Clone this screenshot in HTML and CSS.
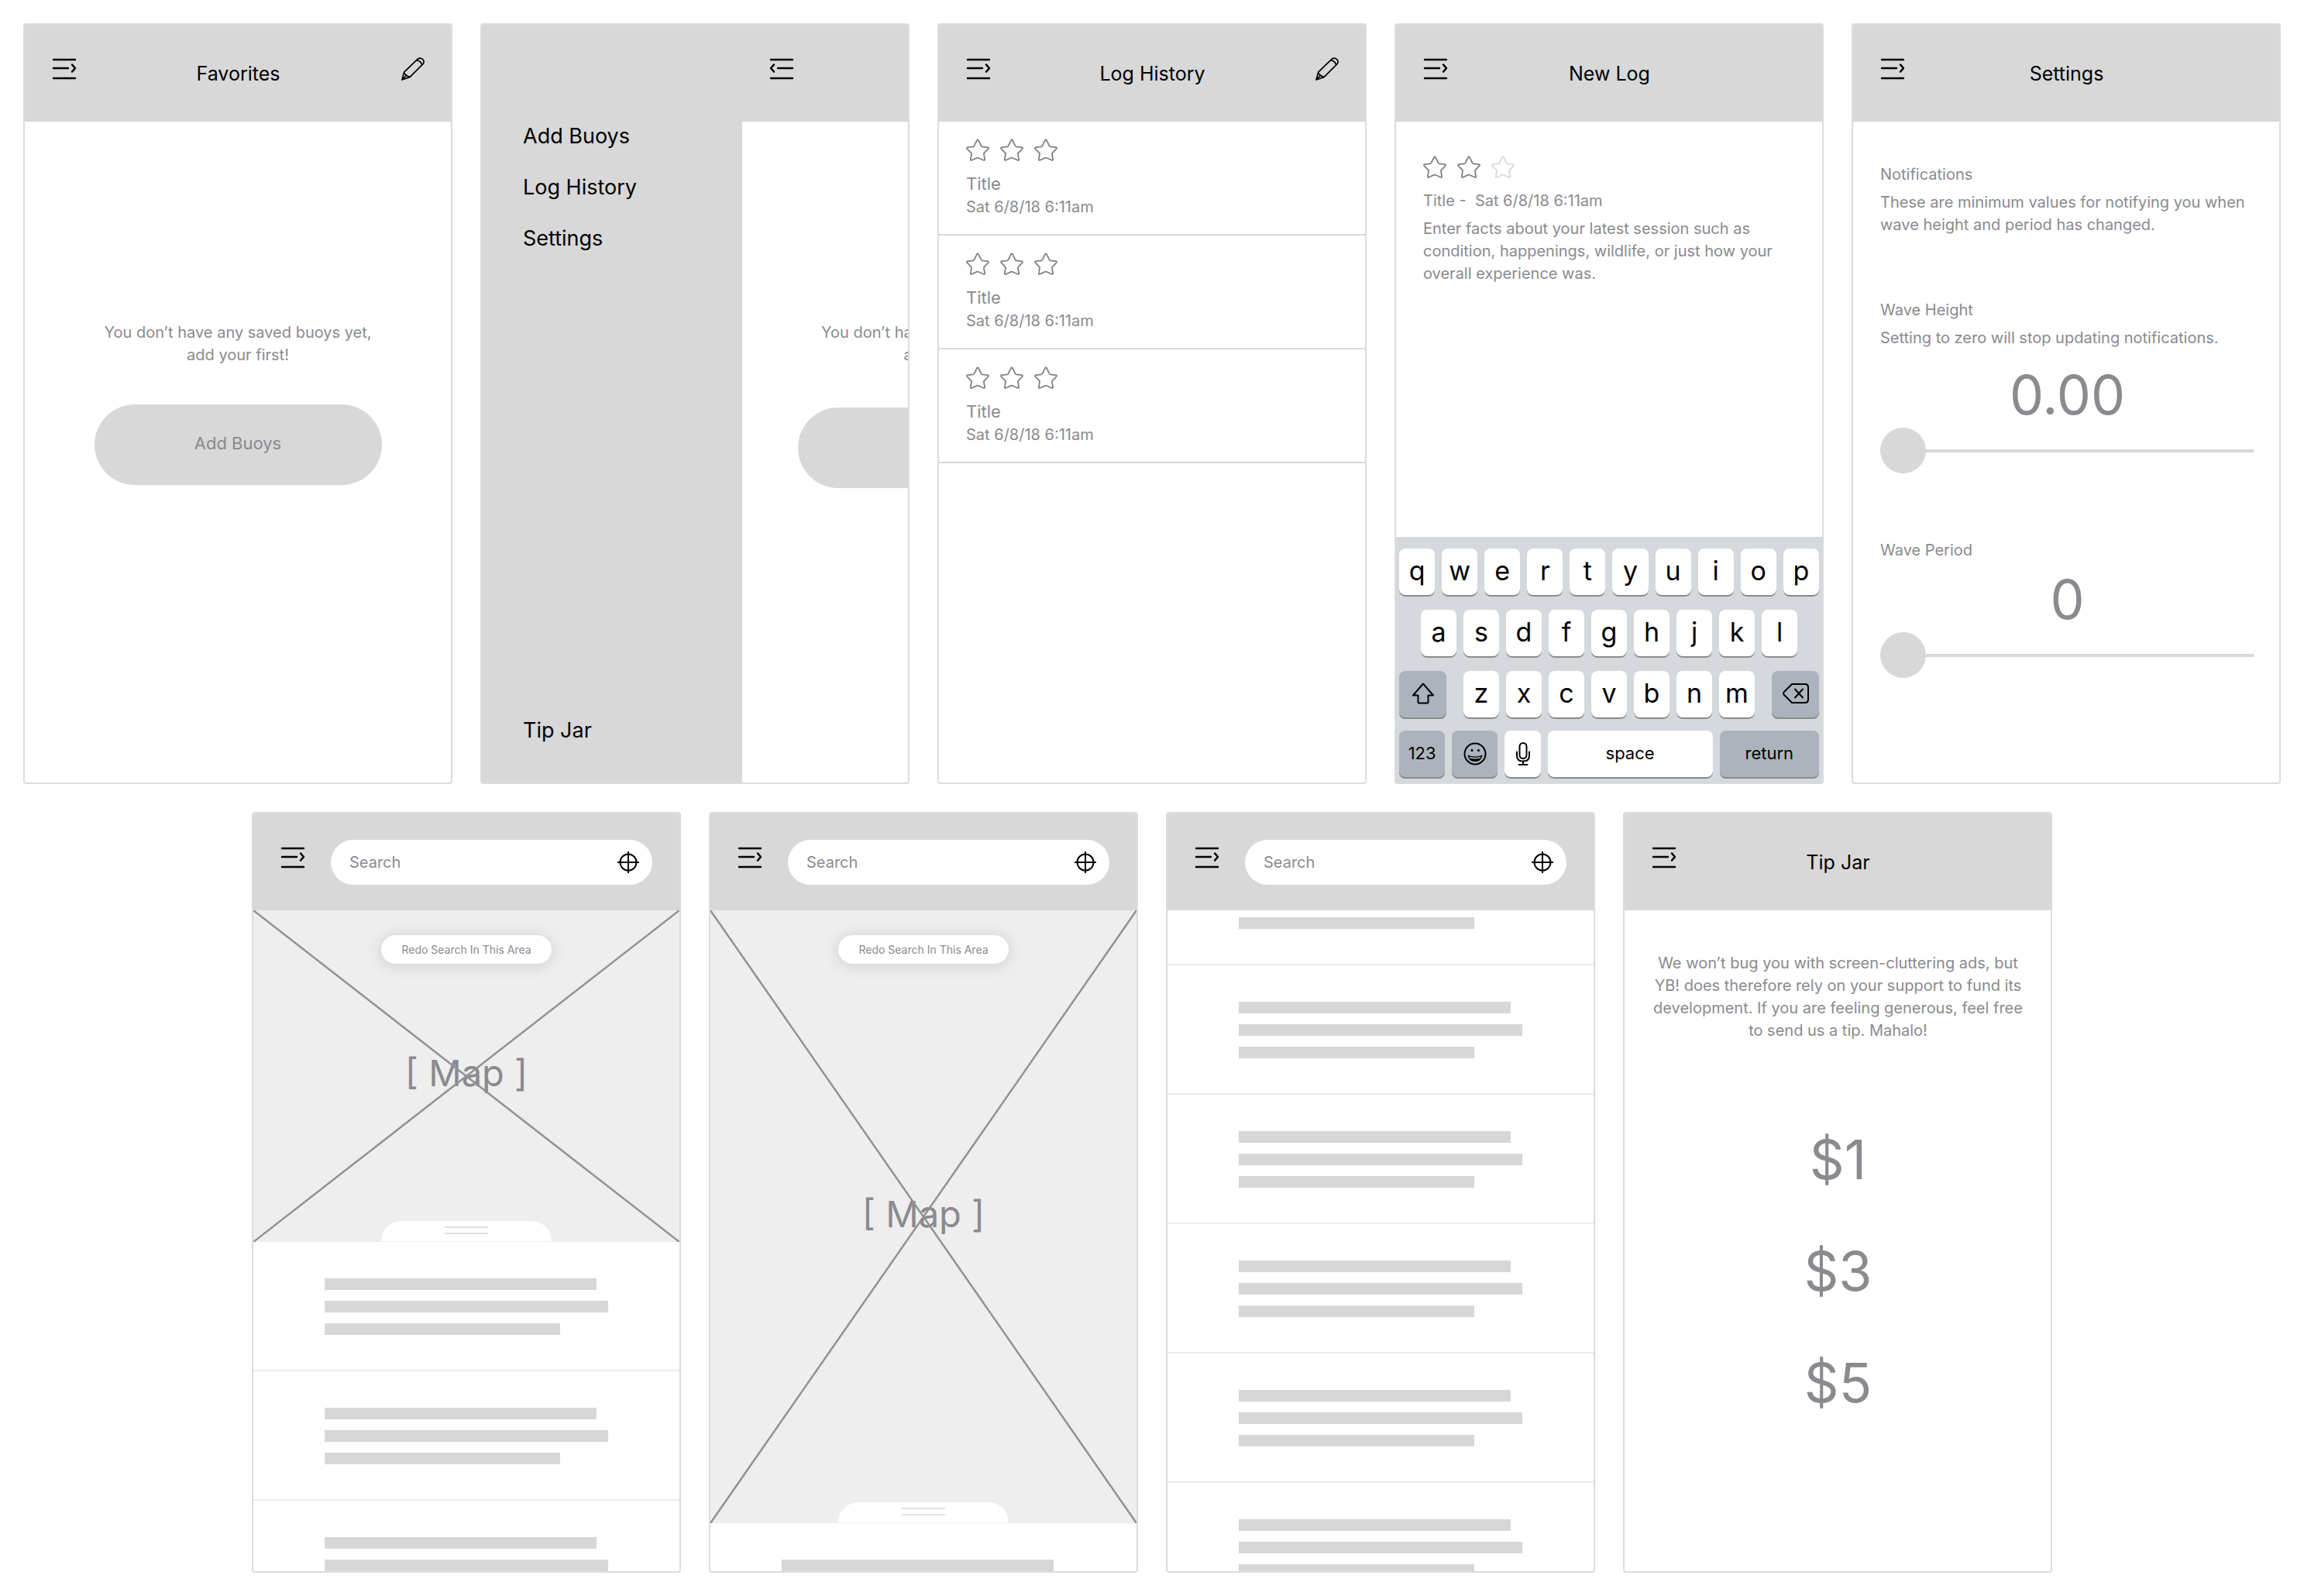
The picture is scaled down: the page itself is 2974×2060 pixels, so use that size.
FILE: index.html
```html
<!DOCTYPE html>
<html lang="en">
<head>
<meta charset="utf-8">
<title>Buoy app wireframes</title>
<link rel="stylesheet" href="styles.css">
</head>
<body>
<svg class="sprite" aria-hidden="true">
  <symbol id="menu" viewBox="0 0 32 28"><path d="M2 2h28M2 13h19M2 26h28M26 8.4l4 4.6-4 4.6"/></symbol>
  <symbol id="menu-back" viewBox="0 0 32 28"><path d="M2 2h28M11 13h19M2 26h28M6 8.4L2 13l4 4.600"/></symbol>
  <symbol id="pencil" viewBox="0 0 30 30"><path d="M1 29l2.600-9.800L21.200 2.200c4.400-3.200 9.800 1.800 7 6.200L11.200 25.400zM3.600 19.200c1.200 3.400 3.800 5.400 7.600 6.200M1 29l5.800-6M19.600 3.800c4 .4 6.600 3 7 6.400"/></symbol>
  <symbol id="star" viewBox="0 0 30 29"><path d="M14 2.200q1-2 2 0l3.700 7.400q.4.7 1.200.8l7 .8q2 .4.600 2l-5 5.200q-.6.600-.5 1.400l1.100 6.800q.2 1.800-1.500 1.200l-6.900-3.100q-.7-.3-1.400 0l-6.900 3.100q-1.700.6-1.500-1.200l1.100-6.800q.1-.8-.5-1.400l-5-5.200q-1.400-1.600.6-2l7-.8q.8-.1 1.200-.8z"/></symbol>
  <symbol id="target" viewBox="0 0 30 30"><circle cx="15" cy="15" r="10.500"/><path d="M15 1v28M1 15h28"/></symbol>
</svg>

<main class="boards">

  <section class="board">
    <header class="bar">
      <button class="icon-btn" aria-label="Open menu"><svg class="icon-menu"><use href="#menu"/></svg></button>
      <h1 class="bar-title">Favorites</h1>
      <button class="icon-btn icon-btn-end" aria-label="Edit"><svg class="icon-pencil"><use href="#pencil"/></svg></button>
    </header>
    <div class="empty">
      <p class="empty-text">You don’t have any saved buoys yet, add your first!</p>
      <button class="pill">Add Buoys</button>
    </div>
  </section>

  <section class="board board-split">
    <nav class="drawer">
      <a href="#">Add Buoys</a>
      <a href="#">Log History</a>
      <a href="#">Settings</a>
      <a class="drawer-last" href="#">Tip Jar</a>
    </nav>
    <div class="pushed">
      <header class="bar">
        <button class="icon-btn" aria-label="Close menu"><svg class="icon-menu"><use href="#menu-back"/></svg></button>
      </header>
      <div class="empty empty-pushed">
        <p class="empty-text">You don’t have any saved buoys yet, add your first!</p>
        <button class="pill" aria-label="Add Buoys"></button>
      </div>
    </div>
  </section>

  <section class="board">
    <header class="bar">
      <button class="icon-btn" aria-label="Open menu"><svg class="icon-menu"><use href="#menu"/></svg></button>
      <h1 class="bar-title">Log History</h1>
      <button class="icon-btn icon-btn-end" aria-label="Edit"><svg class="icon-pencil"><use href="#pencil"/></svg></button>
    </header>
    <ul class="logs">
      <li class="log">
        <div class="stars"><svg class="star"><use href="#star"/></svg><svg class="star"><use href="#star"/></svg><svg class="star"><use href="#star"/></svg></div>
        <h2 class="log-title">Title</h2>
        <p class="log-date">Sat 6/8/18 6:11am</p>
      </li>
      <li class="log">
        <div class="stars"><svg class="star"><use href="#star"/></svg><svg class="star"><use href="#star"/></svg><svg class="star"><use href="#star"/></svg></div>
        <h2 class="log-title">Title</h2>
        <p class="log-date">Sat 6/8/18 6:11am</p>
      </li>
      <li class="log">
        <div class="stars"><svg class="star"><use href="#star"/></svg><svg class="star"><use href="#star"/></svg><svg class="star"><use href="#star"/></svg></div>
        <h2 class="log-title">Title</h2>
        <p class="log-date">Sat 6/8/18 6:11am</p>
      </li>
    </ul>
  </section>

  <section class="board">
    <header class="bar">
      <button class="icon-btn" aria-label="Open menu"><svg class="icon-menu"><use href="#menu"/></svg></button>
      <h1 class="bar-title">New Log</h1>
    </header>
    <div class="entry">
      <div class="stars">
        <button class="star-btn" aria-label="1 star"><svg class="star"><use href="#star"/></svg></button>
        <button class="star-btn" aria-label="2 stars"><svg class="star"><use href="#star"/></svg></button>
        <button class="star-btn" aria-label="3 stars"><svg class="star star-off"><use href="#star"/></svg></button>
      </div>
      <label class="entry-title" for="entry">Title -&nbsp; Sat 6/8/18 6:11am</label>
      <textarea class="entry-text" id="entry" rows="3" placeholder="Enter facts about your latest session such as condition, happenings, wildlife, or just how your overall experience was."></textarea>
    </div>
    <div class="keyboard">
      <div class="keys">
        <button class="key">q</button><button class="key">w</button><button class="key">e</button><button class="key">r</button><button class="key">t</button><button class="key">y</button><button class="key">u</button><button class="key">i</button><button class="key">o</button><button class="key">p</button>
      </div>
      <div class="keys keys-home">
        <button class="key">a</button><button class="key">s</button><button class="key">d</button><button class="key">f</button><button class="key">g</button><button class="key">h</button><button class="key">j</button><button class="key">k</button><button class="key">l</button>
      </div>
      <div class="keys">
        <button class="key key-dark key-shift" aria-label="Shift"><svg class="key-icon" viewBox="0 0 32 32"><path d="M16 3.500L29 18.500h-6.500v8.500q0 1.500-1.500 1.500H11q-1.500 0-1.500-1.500v-8.500H3z"/></svg></button>
        <button class="key">z</button><button class="key">x</button><button class="key">c</button><button class="key">v</button><button class="key">b</button><button class="key">n</button><button class="key">m</button>
        <button class="key key-dark key-delete" aria-label="Delete"><svg class="key-icon key-icon-wide" viewBox="0 0 36 28"><path d="M13 2h17q4 0 4 4v16q0 4-4 4H13L2.500 15.500q-1.200-1.500 0-3zM17 8.500l10 11M27 8.500l-10 11"/></svg></button>
      </div>
      <div class="keys keys-last">
        <button class="key key-dark key-mode">123</button>
        <button class="key key-dark key-mode" aria-label="Emoji"><svg class="key-icon" viewBox="0 0 32 32"><circle cx="16" cy="16" r="13.500"/><path class="solid" d="M6.500 17.500q9.500 4 19 0-1 8.500-9.500 8.500t-9.500-8.500z"/><path class="teeth" d="M8.500 19.600q7.500 2.400 15 0l-.6 1.800q-7 2-13.800 0z"/><circle class="solid" cx="12" cy="11.500" r="1.600"/><circle class="solid" cx="20.500" cy="11.500" r="1.600"/></svg></button>
        <button class="key" aria-label="Dictate"><svg class="key-icon" viewBox="0 0 32 32"><rect x="11.500" y="2" width="9" height="20" rx="4.500"/><path d="M8 13.500v5q0 7 8 7t8-7v-5M16 25.500v4.500M10.500 30h11"/></svg></button>
        <button class="key key-space">space</button>
        <button class="key key-dark key-return">return</button>
      </div>
    </div>
  </section>

  <section class="board">
    <header class="bar">
      <button class="icon-btn" aria-label="Open menu"><svg class="icon-menu"><use href="#menu"/></svg></button>
      <h1 class="bar-title">Settings</h1>
    </header>
    <form class="settings">
      <div class="setting">
        <h2 class="setting-name">Notifications</h2>
        <p>These are minimum values for notifying you when wave height and period has changed.</p>
      </div>
      <div class="setting setting-height">
        <label class="setting-name" for="height">Wave Height</label>
        <p>Setting to zero will stop updating notifications.</p>
        <output class="value" for="height">0.00</output>
        <input class="slider" id="height" type="range" min="0" max="20" value="0">
      </div>
      <div class="setting setting-period">
        <label class="setting-name" for="period">Wave Period</label>
        <output class="value" for="period">0</output>
        <input class="slider" id="period" type="range" min="0" max="20" value="0">
      </div>
    </form>
  </section>

  <section class="board">
    <header class="bar bar-search">
      <button class="icon-btn" aria-label="Open menu"><svg class="icon-menu"><use href="#menu"/></svg></button>
      <div class="search">
        <input type="search" aria-label="Search" placeholder="Search">
        <button class="icon-plain" aria-label="Use my location"><svg class="icon-target"><use href="#target"/></svg></button>
      </div>
    </header>
    <div class="map map-half">
      <span class="map-label">[ Map ]</span>
      <svg class="cross" preserveAspectRatio="none" viewBox="0 0 100 100"><path d="M0 0L100 100M100 0L0 100"/></svg>
      <button class="redo">Redo Search In This Area</button>
      <div class="handle"><i></i><i></i></div>
    </div>
    <ul class="list">
      <li><i></i><i></i><i></i></li>
      <li><i></i><i></i><i></i></li>
      <li><i></i><i></i><i></i></li>
    </ul>
  </section>

  <section class="board">
    <header class="bar bar-search">
      <button class="icon-btn" aria-label="Open menu"><svg class="icon-menu"><use href="#menu"/></svg></button>
      <div class="search">
        <input type="search" aria-label="Search" placeholder="Search">
        <button class="icon-plain" aria-label="Use my location"><svg class="icon-target"><use href="#target"/></svg></button>
      </div>
    </header>
    <div class="map map-full">
      <span class="map-label">[ Map ]</span>
      <svg class="cross" preserveAspectRatio="none" viewBox="0 0 100 100"><path d="M0 0L100 100M100 0L0 100"/></svg>
      <button class="redo">Redo Search In This Area</button>
      <div class="handle"><i></i><i></i></div>
    </div>
    <ul class="list">
      <li><i></i><i></i><i></i></li>
    </ul>
  </section>

  <section class="board">
    <header class="bar bar-search">
      <button class="icon-btn" aria-label="Open menu"><svg class="icon-menu"><use href="#menu"/></svg></button>
      <div class="search">
        <input type="search" aria-label="Search" placeholder="Search">
        <button class="icon-plain" aria-label="Use my location"><svg class="icon-target"><use href="#target"/></svg></button>
      </div>
    </header>
    <ul class="list">
      <li class="list-cut"><i class="short"></i></li>
      <li><i></i><i></i><i></i></li>
      <li><i></i><i></i><i></i></li>
      <li><i></i><i></i><i></i></li>
      <li><i></i><i></i><i></i></li>
      <li><i></i><i></i><i></i></li>
    </ul>
  </section>

  <section class="board">
    <header class="bar">
      <button class="icon-btn" aria-label="Open menu"><svg class="icon-menu"><use href="#menu"/></svg></button>
      <h1 class="bar-title">Tip Jar</h1>
    </header>
    <div class="tips">
      <p>We won’t bug you with screen-cluttering ads, but YB! does therefore rely on your support to fund its development. If you are feeling generous, feel free to send us a tip. Mahalo!</p>
      <button class="tip">$1</button>
      <button class="tip">$3</button>
      <button class="tip">$5</button>
    </div>
  </section>

</main>
</body>
</html>
```
FILE: styles.css
```css
:root {
  --grey: #d8d8d8;
  --line: #dcdcdc;
  --ink: #8a8a8f;
  --pale: #eeeeee;
}

* { box-sizing: border-box; }

body {
  margin: 0;
  background: #fff;
  color: var(--ink);
  font: 20px/29px Inter, "Liberation Sans", sans-serif;
}

h1, h2, p, ul { margin: 0; padding: 0; font-weight: 400; }
ul { list-style: none; }
button, input, textarea { font: inherit; color: inherit; margin: 0; padding: 0; border: 0; background: none; }
svg { display: block; fill: none; stroke-linecap: round; stroke-linejoin: round; }
.sprite { position: absolute; width: 0; height: 0; }

/* Artboards: five to a row */
.boards {
  display: flex;
  flex-wrap: wrap;
  justify-content: center;
  gap: 36px;
  padding: 30px;
}

.board {
  flex: 0 0 calc((100% - 144px) / 5);
  aspect-ratio: 554 / 982;
  min-height: 0;
  display: flex;
  flex-direction: column;
  border: 2px solid var(--line);
  border-radius: 4px;
  overflow: hidden;
}

/* Top bar */
.bar {
  flex: none;
  display: grid;
  grid-template-columns: 1fr auto 1fr;
  align-items: center;
  height: 125px;
  padding: 1px 34px 0 35px;
  background: var(--grey);
  color: #000;
}
.bar-title { font-size: 25px; line-height: 32px; }
.icon-btn { justify-self: start; padding-bottom: 12px; }
.icon-btn-end { justify-self: end; }
.icon-menu { width: 32px; height: 28px; stroke: #000; stroke-width: 2.400; }
.icon-pencil { width: 30px; height: 30px; stroke: #000; stroke-width: 1.700; }

.bar-search { grid-template-columns: auto 1fr; column-gap: 33px; padding-right: 35px; }
.search {
  display: flex;
  align-items: center;
  height: 58px;
  padding: 0 16px 0 24px;
  border-radius: 29px;
  background: #fff;
}
.search input { flex: 1; min-width: 0; height: 29px; outline: 0; appearance: none; }
::placeholder { color: var(--ink); opacity: 1; }
.icon-target { width: 30px; height: 30px; stroke: #000; stroke-width: 2; stroke-linecap: butt; }

/* Empty favourites */
.empty { display: flex; flex-direction: column; align-items: center; gap: 49px; padding-top: 258px; }
.empty-text { max-width: 370px; text-align: center; }
.pill {
  width: 371px;
  height: 104px;
  padding-bottom: 4px;
  border-radius: 52px;
  background: var(--grey);
  font-size: 22px;
}
.empty-pushed { gap: 53px; }
.empty-pushed .pill { width: 406px; }

/* Drawer */
.board-split { flex-direction: row; }
.drawer {
  flex: 0 0 61%;
  display: flex;
  flex-direction: column;
  padding: 111px 0 34px 53px;
  background: var(--grey);
}
.drawer a { color: #000; text-decoration: none; font-size: 27px; line-height: 66px; }
.drawer-last { margin-top: auto; }
.pushed { flex: 0 0 100%; }

/* Log history */
.log { padding: 22px 34px 20px 35px; border-bottom: 2px solid var(--grey); }
.stars { display: flex; gap: 14px; margin-bottom: 14px; }
.star { width: 30px; height: 29px; stroke: #808084; stroke-width: 1.800; }
.star-off { stroke: var(--grey); }
.log-title { font-size: 22px; line-height: 30px; }
.log-date { line-height: 30px; }

/* New log */
.entry { display: flex; flex-direction: column; padding: 44px 34px 0 35px; }
.entry .stars { margin-bottom: 15px; }
.entry-title { margin-bottom: 7px; }
.entry-text { display: block; width: 100%; resize: none; outline: 0; overflow: hidden; }

.keyboard { margin-top: auto; padding: 15px 4px 5px; background: #d5d8dd; }
.keys { display: flex; gap: 9px; margin-bottom: 17px; }
.keys-home { padding: 0 28px; }
.keys-last { margin: -2px 0 0; }
.key {
  flex: 46 1 0;
  min-width: 0;
  height: 62px;
  display: flex;
  align-items: center;
  justify-content: center;
  padding-bottom: 5px;
  border-radius: 8px;
  background: #fff;
  box-shadow: inset 0 -2px 0 #898a8d;
  color: #000;
  font-size: 34px;
}
.key-dark { background: #adb3bc; }
.key-shift { flex-grow: 61; margin-right: 13px; }
.key-delete { flex-grow: 61; margin-left: 13px; }
.keys-last .key { font-size: 22px; padding-bottom: 3px; }
.keys-last .key-mode { flex-grow: 59; }
.keys-last .key-space { flex-grow: 212; }
.keys-last .key-return { flex-grow: 128; }
.key-icon { width: 32px; height: 32px; stroke: #000; stroke-width: 2; }
.key-icon-wide { width: 36px; height: 28px; }
.solid { fill: #000; stroke: none; }
.teeth { fill: #adb3bc; stroke: none; }

/* Settings */
.settings { padding: 54px 32px 0 35px; }
.setting { display: flex; flex-direction: column; gap: 7px; }
.setting-name { font-size: 20px; line-height: 29px; }
.setting-height { margin-top: 81px; }
.setting-period { margin-top: 85px; }
.value { font-size: 70px; line-height: 84px; text-align: center; }
.setting-height .value { margin-top: 10px; }
.slider { width: 100%; height: 59px; margin-top: -7px; appearance: none; outline: 0; }
.slider::-webkit-slider-runnable-track { height: 4px; border-radius: 2px; background: var(--grey); }
.slider::-webkit-slider-thumb {
  appearance: none;
  width: 59px;
  height: 59px;
  margin-top: -28px;
  border-radius: 50%;
  background: var(--grey);
}

/* Map */
.map {
  position: relative;
  flex: none;
  display: flex;
  align-items: center;
  justify-content: center;
  background: var(--pale);
}
.map-half { height: 428px; }
.map-full { height: 791px; }
.map-label { font-size: 47px; line-height: 60px; padding-bottom: 8px; }
.cross { position: absolute; inset: 0; width: 100%; height: 100%; stroke: #929292; }
.cross path { stroke-width: 2.500px; vector-effect: non-scaling-stroke; }
.redo {
  position: absolute;
  top: 32px;
  left: 50%;
  width: 220px;
  height: 37px;
  margin-left: -110px;
  border-radius: 19px;
  background: #fff;
  box-shadow: 0 2px 20px rgba(0, 0, 0, .15);
  font-size: 14px;
}
.handle {
  position: absolute;
  bottom: 1px;
  left: 50%;
  width: 220px;
  height: 26px;
  margin-left: -110px;
  display: flex;
  flex-direction: column;
  align-items: center;
  justify-content: center;
  gap: 6px;
  padding-bottom: 2px;
  border-radius: 26px 26px 0 0;
  background: #fff;
}
.handle i { width: 56px; height: 2px; background: #e2e2e2; }

/* Placeholder rows */
.list { min-height: 0; overflow: hidden; }
.list li { display: flex; flex-direction: column; gap: 14px; padding: 47px 92px 45px; border-bottom: 2px solid #ececec; }
.list i { height: 15px; width: 96%; background: #d7d7d7; }
.list i:nth-child(2) { width: 100%; }
.list i:nth-child(3), .list .short { width: 83%; }
.list .list-cut { padding-top: 9px; }

/* Tip jar */
.tips { display: flex; flex-direction: column; align-items: center; padding: 54px 34px 0 35px; text-align: center; }
.tips p { margin-bottom: 80px; }
.tip { font-size: 70px; line-height: 144px; }
```
